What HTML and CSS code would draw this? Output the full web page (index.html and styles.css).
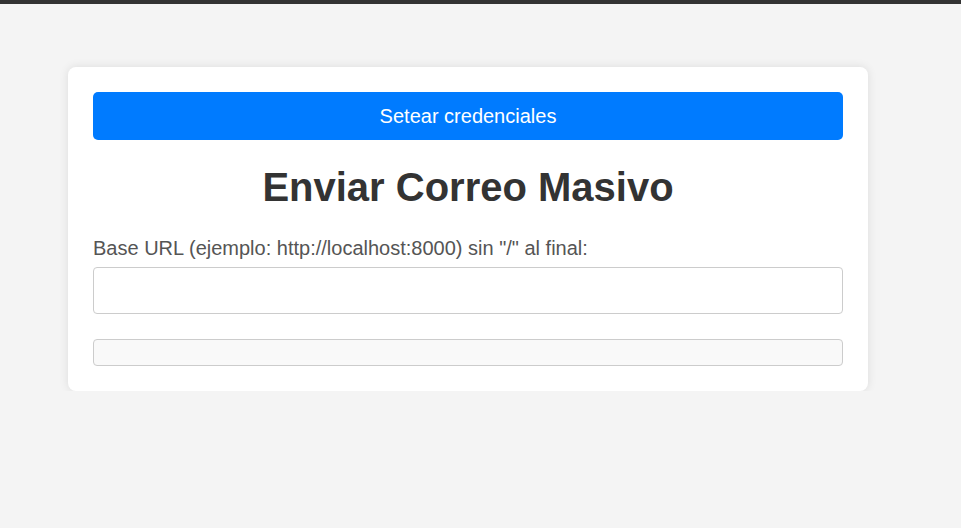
FILE: index.html
```html
<!DOCTYPE html>
<html lang="es">
<head>
<meta charset="utf-8">
<title>Enviar Correo Masivo</title>
<link rel="stylesheet" href="styles.css">
</head>
<body>
<div class="topbar"></div>
<div class="card">
  <button class="btn" type="button">Setear credenciales</button>
  <h1 class="title">Enviar Correo Masivo</h1>
  <label class="label" for="baseUrl">Base URL (ejemplo: http://localhost:8000) sin "/" al final:</label>
  <input class="input" id="baseUrl" type="text">
  <div class="status"></div>
</div>
</body>
</html>
```
FILE: styles.css
```css
* { box-sizing: border-box; }
html, body { margin: 0; padding: 0; }
body {
  background: #f4f4f4;
  font-family: "Liberation Sans", Arial, sans-serif;
  color: #333;
}
.topbar {
  height: 4px;
  background: #333;
}
.card {
  width: 800px;
  margin: 63px 0 0 68px;
  background: #fff;
  border-radius: 8px;
  padding: 25px;
  box-shadow: 0 0 10px rgba(0,0,0,0.1);
  display: flex;
  flex-direction: column;
}
.btn {
  height: 48px;
  background: #007bff;
  color: #fff;
  border: none;
  border-radius: 5px;
  font-family: "Liberation Sans", Arial, sans-serif;
  font-size: 20px;
  padding: 0;
}
.title {
  font-size: 40px;
  line-height: 46px;
  text-align: center;
  margin: 24px 0 27px;
  color: #333;
}
.label {
  font-size: 20px;
  line-height: 23px;
  color: #555;
  margin-bottom: 7px;
}
.input {
  height: 47px;
  border: 1px solid #ccc;
  border-radius: 4px;
  font-size: 16px;
  padding: 10px;
}
.status {
  margin-top: 25px;
  height: 27px;
  background: #f9f9f9;
  border: 1px solid #ccc;
  border-radius: 4px;
}
```
